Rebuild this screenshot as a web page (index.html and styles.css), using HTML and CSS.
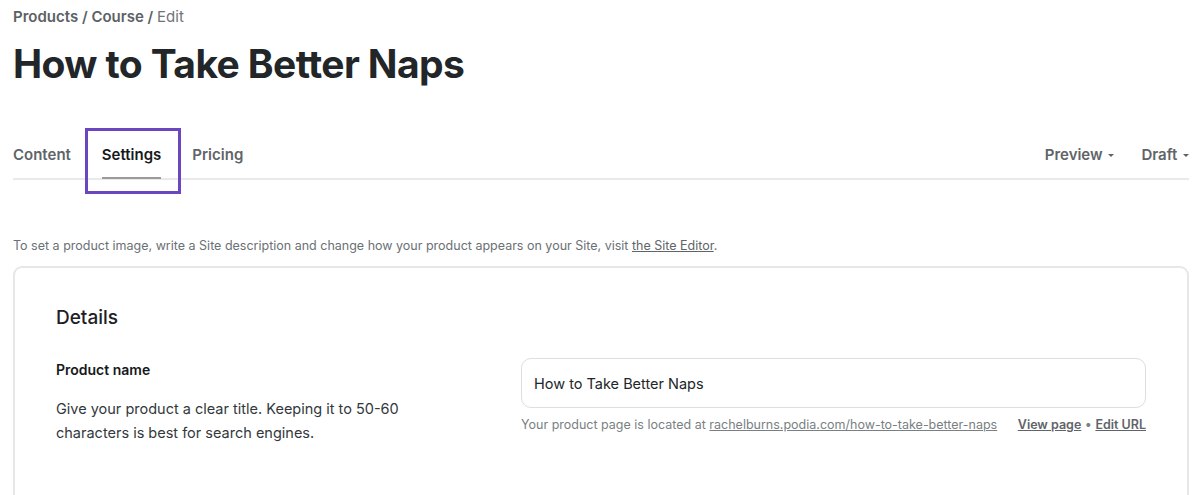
FILE: index.html
```html
<!DOCTYPE html>
<html>
<head>
<meta charset="utf-8">
<link rel="stylesheet" href="styles.css">
</head>
<body>
<div class="page">
  <nav class="crumbs"><span class="crumb">Products</span> / <span class="crumb">Course</span> / <span class="crumb-current">Edit</span></nav>
  <h1 class="title">How to Take Better Naps</h1>
  <div class="tabbar">
    <div class="tabs">
      <a class="tab">Content</a>
      <a class="tab active">Settings<span class="highlight"></span></a>
      <a class="tab">Pricing</a>
    </div>
    <div class="actions">
      <a class="tab dropdown">Preview <span class="caret"></span></a>
      <a class="tab dropdown">Draft <span class="caret"></span></a>
    </div>
  </div>
  <p class="notice">To set a product image, write a Site description and change how your product appears on your Site, visit <a class="link">the Site Editor</a>.</p>
  <section class="card">
    <h2 class="card-title">Details</h2>
    <div class="field">
      <div class="field-info">
        <div class="label">Product name</div>
        <p class="desc">Give your product a clear title. Keeping it to 50-60 characters is best for search engines.</p>
      </div>
      <div class="field-control">
        <div class="input">How to Take Better Naps</div>
        <div class="help">
          <span>Your product page is located at <a class="link">rachelburns.podia.com/how-to-take-better-naps</a></span>
          <span class="help-links"><a class="strong-link">View page</a> • <a class="strong-link">Edit URL</a></span>
        </div>
      </div>
    </div>
  </section>
</div>
</body>
</html>
```

FILE: styles.css
```css
* { box-sizing: border-box; }
html, body { margin: 0; padding: 0; background: #fff; }
body {
  font-family: Inter, "Liberation Sans", sans-serif;
  color: #222629;
  overflow: hidden;
}
.page {
  padding: 7px 11px 0 13px;
}
.crumbs {
  font-size: 15px;
  font-weight: 600;
  color: #5c6166;
  line-height: 20px;
}
.crumb-current { font-weight: 400; color: #6f7478; }
.title {
  margin: 13px 0 0;
  font-size: 39px;
  font-weight: 700;
  letter-spacing: -0.6px;
  line-height: 48px;
  color: #222629;
}
.tabbar {
  margin-top: 49px;
  display: flex;
  justify-content: space-between;
  border-bottom: 2px solid #e8e9ea;
  height: 43px;
}
.tabs, .actions { display: flex; }
.tabs { gap: 31px; }
.actions { gap: 27px; }
.tab {
  position: relative;
  font-size: 15px;
  font-weight: 600;
  color: #5f6468;
  line-height: 20px;
  padding-top: 8px;
  height: 43px;
}
.tab.active {
  color: #16191b;
  border-bottom: 2px solid #9b9b9b;
  height: 42px;
}
.highlight {
  position: absolute;
  left: -17px;
  right: -20px;
  top: -9px;
  height: 66px;
  border: 3px solid #6c45c0;
}
.caret {
  display: inline-block;
  width: 0; height: 0;
  border-left: 3px solid transparent;
  border-right: 3px solid transparent;
  border-top: 3px solid currentColor;
  vertical-align: middle;
  margin-left: 2px;
}
.notice {
  margin: 57px 0 0;
  font-size: 12.5px;
  line-height: 18px;
  color: #6b7075;
}
.link { color: #5f6468; text-decoration: underline; }
.card {
  margin-top: 11px;
  border: 2px solid #e6e7e8;
  border-radius: 9px;
  padding: 38px 41px 60px;
}
.card-title {
  margin: 0;
  font-size: 19px;
  font-weight: 500;
  line-height: 24px;
  color: #1d2124;
}
.field {
  margin-top: 28px;
  display: grid;
  grid-template-columns: 1fr 625px;
}
.label {
  font-size: 14px;
  font-weight: 600;
  line-height: 20px;
  color: #16191b;
  margin-top: 2px;
}
.desc {
  margin: 17px 0 0;
  font-size: 14.5px;
  line-height: 24px;
  color: #33383c;
  max-width: 360px;
}
.input {
  height: 50px;
  border: 1px solid #dcdedf;
  border-radius: 10px;
  padding: 0 12px;
  display: flex;
  align-items: center;
  font-size: 14.5px;
  color: #222629;
}
.help {
  margin-top: 8px;
  display: flex;
  justify-content: space-between;
  font-size: 12.5px;
  line-height: 18px;
  color: #7a7f83;
}
.help .link { color: #7a7f83; }
.strong-link { font-weight: 600; color: #5f6468; text-decoration: underline; }
```
